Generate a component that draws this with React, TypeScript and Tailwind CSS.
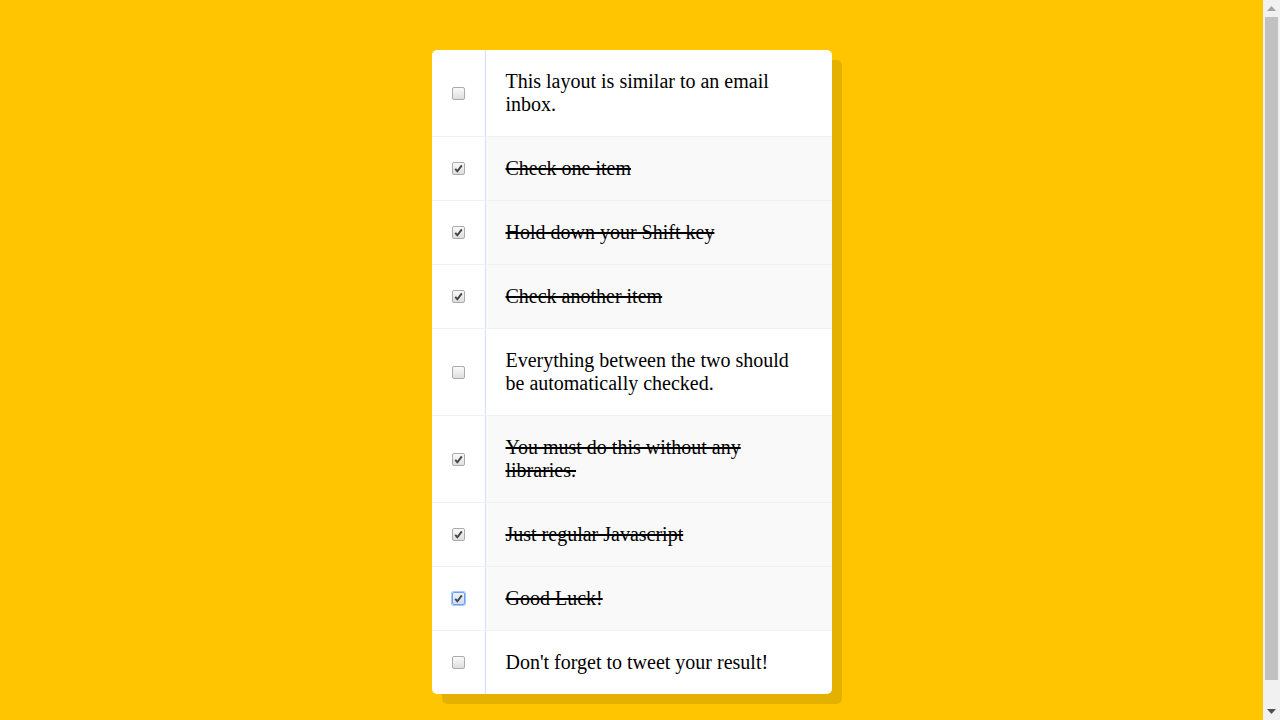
import React, { useState } from 'react';

interface Item {
  id: number;
  text: string;
  checked: boolean;
}

const initialItems: Item[] = [
  { id: 1, text: 'This layout is similar to an email inbox.', checked: false },
  { id: 2, text: 'Check one item', checked: true },
  { id: 3, text: 'Hold down your Shift key', checked: true },
  { id: 4, text: 'Check another item', checked: true },
  { id: 5, text: 'Everything between the two should be automatically checked.', checked: false },
  { id: 6, text: 'You must do this without any libraries.', checked: true },
  { id: 7, text: 'Just regular Javascript', checked: true },
  { id: 8, text: 'Good Luck!', checked: true },
  { id: 9, text: "Don't forget to tweet your result!", checked: false },
];

const Checkbox: React.FC<{ checked: boolean; focused?: boolean; onToggle: () => void }> = ({
  checked,
  focused,
  onToggle,
}) => {
  return (
    <button
      type="button"
      onClick={onToggle}
      className={`m-5 w-[13px] h-[13px] shrink-0 rounded-[2px] border flex items-center justify-center p-0 ${
        focused
          ? 'border-[#6f9ff0] ring-1 ring-[#a9c6f7] bg-gradient-to-b from-[#eef3fd] to-[#cfdcf5]'
          : 'border-[#ababab] bg-gradient-to-b from-[#fafafa] to-[#dedede]'
      }`}
    >
      {checked && (
        <svg width="9" height="9" viewBox="0 0 9 9">
          <path d="M1.2 4.8 L3.4 7.2 L7.8 1.4" fill="none" stroke="#444" strokeWidth="1.9" />
        </svg>
      )}
    </button>
  );
};

// the reference shows the browser's own scrollbar, since the page is 744px tall
const Scrollbar: React.FC = () => (
  <aside className="w-[17px] h-screen sticky top-0 shrink-0 bg-[#f1f1f1] flex flex-col">
    <div className="h-[17px] flex items-center justify-center">
      <svg width="9" height="5" viewBox="0 0 9 5">
        <path d="M0 5 L4.5 0 L9 5 Z" fill="#a3a3a3" />
      </svg>
    </div>
    <div className="flex-1 px-[2px]">
      <div className="h-[663px] bg-[#c1c1c1]" />
    </div>
    <div className="h-[17px] flex items-center justify-center">
      <svg width="9" height="5" viewBox="0 0 9 5">
        <path d="M0 0 L9 0 L4.5 5 Z" fill="#505050" />
      </svg>
    </div>
  </aside>
);

const App: React.FC = () => {
  const [items, setItems] = useState<Item[]>(initialItems);

  const toggle = (id: number) => {
    setItems(items.map(i => (i.id === id ? { ...i, checked: !i.checked } : i)));
  };

  return (
    <div className="flex items-start bg-[#ffc600] font-['Liberation_Serif',serif]">
      <main className="flex-1 py-[50px]">
        <div className="max-w-[400px] mx-auto bg-white rounded-[5px] shadow-[10px_10px_0_rgba(0,0,0,0.1)]">
          {items.map((item, idx) => (
            <div
              key={item.id}
              className={`flex items-center ${idx < items.length - 1 ? 'border-b border-[#f1f1f1]' : ''}`}
            >
              <Checkbox checked={item.checked} focused={item.id === 8} onToggle={() => toggle(item.id)} />
              <p
                className={`flex-1 m-0 p-5 text-[20px] leading-[23px] text-black border-l border-[#d1e2ff] self-stretch flex items-center ${
                  item.checked ? 'bg-[#f9f9f9] line-through' : ''
                }`}
              >
                <span>{item.text}</span>
              </p>
            </div>
          ))}
        </div>
      </main>
      <Scrollbar />
    </div>
  );
};

export default App;
